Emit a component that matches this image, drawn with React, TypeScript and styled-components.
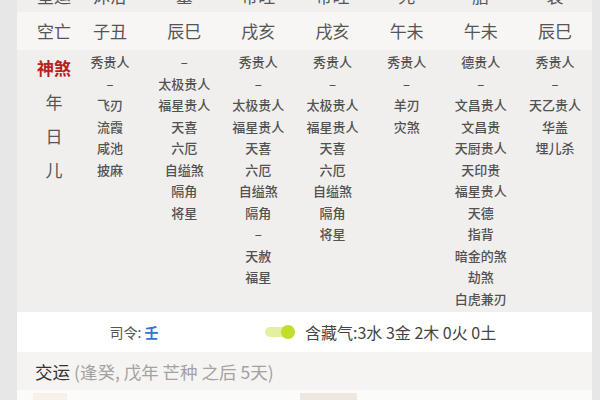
import React from "react";
import styled, { createGlobalStyle } from "styled-components";

const GlobalStyle = createGlobalStyle`
  html, body {
    margin: 0;
    padding: 0;
    background: #e7e7e7;
    overflow: hidden;
    font-family: "Noto Sans CJK SC", "Noto Sans", sans-serif;
  }
`;

const Page = styled.div`
  margin-top: -24px;
  padding-left: 17px;
  width: 575px;
`;

const Panel = styled.div`
  display: flex;
  flex-direction: column;
  background: #f0efed;
`;

const Grid = styled.div<{ $bg: string; $h?: number }>`
  display: grid;
  grid-template-columns: 56px repeat(7, 1fr);
  background: ${(p) => p.$bg};
  ${(p) => (p.$h ? `height: ${p.$h}px;` : "")}
`;

const HeadCell = styled.div<{ $label?: boolean; $end?: boolean }>`
  display: flex;
  align-items: ${(p) => (p.$end ? "flex-end" : "center")};
  justify-content: center;
  padding-left: ${(p) => (p.$label ? "18px" : "0")};
  padding-bottom: ${(p) => (p.$end ? "6px" : "0")};
  font-size: 17px;
  color: #555;
  line-height: 20px;
`;

const LabelCol = styled.div`
  display: flex;
  flex-direction: column;
  align-items: center;
  padding-left: 18px;
  padding-top: 6px;
`;

const Shensha = styled.div`
  font-size: 17px;
  line-height: 24px;
  font-weight: 700;
  color: #b8211c;
  margin-bottom: 5px;
`;

const BigChar = styled.div`
  font-size: 17px;
  line-height: 34px;
  color: #555;
`;

const StarCol = styled.div`
  display: flex;
  flex-direction: column;
  align-items: center;
  padding-top: 1px;
  padding-bottom: 3px;
`;

const Star = styled.div`
  font-size: 13px;
  line-height: 21.5px;
  font-weight: 500;
  color: #525252;
  white-space: nowrap;
`;

const InfoRow = styled.div`
  display: grid;
  grid-template-columns: 234px 1fr;
  height: 40px;
  background: #ffffff;
  align-items: center;
`;

const Siling = styled.div`
  text-align: center;
  font-size: 14px;
  color: #555;
`;

const Blue = styled.span`
  color: #2f74d0;
  font-weight: 600;
`;

const Hidden = styled.div`
  display: flex;
  align-items: center;
  gap: 8px;
  padding-left: 12px;
  font-size: 16px;
  color: #444;
`;

const Toggle = styled.div`
  position: relative;
  width: 34px;
  height: 16px;
  display: flex;
  align-items: center;
`;

const Track = styled.div`
  width: 29px;
  height: 10px;
  margin-left: 2px;
  border-radius: 5px;
  background: #e4efa2;
`;

const Knob = styled.div`
  position: absolute;
  right: 2px;
  top: 1px;
  width: 14px;
  height: 14px;
  border-radius: 50%;
  background: #c4dc2a;
`;

const LuckRow = styled.div`
  height: 38px;
  display: flex;
  align-items: center;
  padding-left: 18px;
  background: #f5f4f2;
  font-size: 17.5px;
`;

const LuckTitle = styled.span`
  color: #333;
  margin-right: 4px;
`;

const LuckSub = styled.span`
  color: #a2a2a2;
`;

const BottomRow = styled.div`
  height: 30px;
  background: #fbfbfa;
  display: flex;
  padding-top: 3px;
`;

const Chip = styled.div<{ $left: number; $w: number; $c: string }>`
  margin-left: ${(p) => p.$left}px;
  width: ${(p) => p.$w}px;
  height: 27px;
  background: ${(p) => p.$c};
`;

const topRow = ["星运", "沐浴", "墓", "帝旺", "帝旺", "死", "胎", "衰"];
const kongwang = ["子丑", "辰巳", "戌亥", "戌亥", "午未", "午未", "辰巳"];

const stars: string[][] = [
  ["秀贵人", "–", "飞刃", "流霞", "咸池", "披麻"],
  ["–", "太极贵人", "福星贵人", "天喜", "六厄", "自缢煞", "隔角", "将星"],
  ["秀贵人", "–", "太极贵人", "福星贵人", "天喜", "六厄", "自缢煞", "隔角", "–", "天赦", "福星"],
  ["秀贵人", "–", "太极贵人", "福星贵人", "天喜", "六厄", "自缢煞", "隔角", "将星"],
  ["秀贵人", "–", "羊刃", "灾煞"],
  ["德贵人", "–", "文昌贵人", "文昌贵", "天厨贵人", "天印贵", "福星贵人", "天德", "指背", "暗金的煞", "劫煞", "白虎兼刃"],
  ["秀贵人", "–", "天乙贵人", "华盖", "埋儿杀"],
];

export default function App() {
  return (
    <>
      <GlobalStyle />
      <Page>
        <Panel>
          <Grid $bg="#f0efed" $h={36}>
            {topRow.map((t, i) => (
              <HeadCell key={i} $label={i === 0} $end>
                {t}
              </HeadCell>
            ))}
          </Grid>
          <Grid $bg="#f7f6f4" $h={38}>
            <HeadCell $label>空亡</HeadCell>
            {kongwang.map((t, i) => (
              <HeadCell key={i}>{t}</HeadCell>
            ))}
          </Grid>
          <Grid $bg="#f0efed">
            <LabelCol>
              <Shensha>神煞</Shensha>
              <BigChar>年</BigChar>
              <BigChar>日</BigChar>
              <BigChar>儿</BigChar>
            </LabelCol>
            {stars.map((col, i) => (
              <StarCol key={i}>
                {col.map((s, j) => (
                  <Star key={j}>{s}</Star>
                ))}
              </StarCol>
            ))}
          </Grid>
          <InfoRow>
            <Siling>
              司令: <Blue>壬</Blue>
            </Siling>
            <Hidden>
              <Toggle>
                <Track />
                <Knob />
              </Toggle>
              <span>含藏气:3水 3金 2木 0火 0土</span>
            </Hidden>
          </InfoRow>
          <LuckRow>
            <LuckTitle>交运</LuckTitle>
            <LuckSub>(逢癸, 戊年 芒种 之后 5天)</LuckSub>
          </LuckRow>
          <BottomRow>
            <Chip $left={16} $w={34} $c="#f8f1ea" />
            <Chip $left={233} $w={57} $c="#efe8e1" />
          </BottomRow>
        </Panel>
      </Page>
    </>
  );
}
